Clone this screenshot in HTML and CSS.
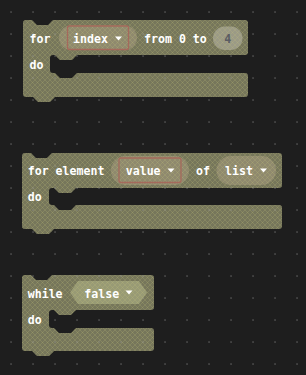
FILE: index.html
```html
<!DOCTYPE html>
<html lang="en">
  <head>
    <meta charset="utf-8" />
    <meta name="viewport" content="width=device-width, initial-scale=1.0" />
    <title>Loops workspace</title>
    <link rel="stylesheet" href="styles.css">
  </head>
  <body>
    <svg class="workspace" width="306" height="375" viewBox="0 0 306 375">
      <defs>
        <pattern id="dots" width="22" height="22" patternUnits="userSpaceOnUse">
          <rect class="dot" x="10.3" y="11.3" width="1.5" height="1.5"></rect>
        </pattern>
        <pattern id="hatch" width="5" height="5" patternUnits="userSpaceOnUse">
          <path class="hatch-line" d="M0 0L5 5M5 0L0 5"></path>
        </pattern>
      </defs>

      <rect class="grid" width="306" height="375"></rect>

      <!-- for index from 0 to 4 -->
      <g class="block-group">
        <path class="block" d="M23,23 Q23,20 26,20 H32 l5,5 h11 l5,-5 H245 Q248,20 248,23 V52 Q248,55 245,55 H77 l-5,5 h-12 l-5,-5 H53 Q50,55 50,58 V70 Q50,73 53,73 H55 l5,5 h12 l5,-5 H245 Q248,73 248,76 V94 Q248,97 245,97 H55 l-5,5 h-12 l-5,-5 H26 Q23,97 23,94 Z"></path>
        <path class="hatch" d="M23,23 Q23,20 26,20 H32 l5,5 h11 l5,-5 H245 Q248,20 248,23 V52 Q248,55 245,55 H77 l-5,5 h-12 l-5,-5 H53 Q50,55 50,58 V70 Q50,73 53,73 H55 l5,5 h12 l5,-5 H245 Q248,73 248,76 V94 Q248,97 245,97 H55 l-5,5 h-12 l-5,-5 H26 Q23,97 23,94 Z"></path>
      </g>

      <!-- for element value of list -->
      <g class="block-group">
        <path class="block" d="M22,156 Q22,153 25,153 H31 l5,5 h11 l5,-5 H279 Q282,153 282,156 V185 Q282,188 279,188 H76 l-5,5 h-12 l-5,-5 H52 Q49,188 49,191 V202 Q49,205 52,205 H54 l5,5 h12 l5,-5 H279 Q282,205 282,208 V226 Q282,229 279,229 H54 l-5,5 h-12 l-5,-5 H25 Q22,229 22,226 Z"></path>
        <path class="hatch" d="M22,156 Q22,153 25,153 H31 l5,5 h11 l5,-5 H279 Q282,153 282,156 V185 Q282,188 279,188 H76 l-5,5 h-12 l-5,-5 H52 Q49,188 49,191 V202 Q49,205 52,205 H54 l5,5 h12 l5,-5 H279 Q282,205 282,208 V226 Q282,229 279,229 H54 l-5,5 h-12 l-5,-5 H25 Q22,229 22,226 Z"></path>
      </g>

      <!-- while false -->
      <g class="block-group">
        <path class="block" d="M22,278 Q22,275 25,275 H31 l5,5 h11 l5,-5 H151 Q154,275 154,278 V307 Q154,310 151,310 H76 l-5,5 h-12 l-5,-5 H52 Q49,310 49,313 V325 Q49,328 52,328 H54 l5,5 h12 l5,-5 H151 Q154,328 154,331 V348 Q154,351 151,351 H54 l-5,5 h-12 l-5,-5 H25 Q22,351 22,348 Z"></path>
        <path class="hatch" d="M22,278 Q22,275 25,275 H31 l5,5 h11 l5,-5 H151 Q154,275 154,278 V307 Q154,310 151,310 H76 l-5,5 h-12 l-5,-5 H52 Q49,310 49,313 V325 Q49,328 52,328 H54 l5,5 h12 l5,-5 H151 Q154,328 154,331 V348 Q154,351 151,351 H54 l-5,5 h-12 l-5,-5 H25 Q22,351 22,348 Z"></path>
      </g>

      <rect class="grid-over" width="306" height="375"></rect>

      <!-- fields block 1 -->
      <text class="label" x="29.5" y="43">for</text>
      <rect class="field-var" x="59" y="25.5" width="78" height="24.5" rx="12.25"></rect>
      <rect class="hatch" x="59" y="25.5" width="78" height="24.5" rx="12.25"></rect>
      <rect class="field-sel" x="67.5" y="26" width="61" height="23.5" rx="2"></rect>
      <text class="label" x="73" y="43">index</text>
      <path class="arrow" d="M115,36.5 H122 L118.5,40.5 Z"></path>
      <text class="label" x="144" y="43">from 0 to</text>
      <rect class="field-num" x="213" y="26.5" width="29.5" height="23.5" rx="11.75"></rect>
      <rect class="hatch" x="213" y="26.5" width="29.5" height="23.5" rx="11.75"></rect>
      <text class="label-num" x="227.75" y="42.7">4</text>
      <text class="label" x="29.5" y="69">do</text>

      <!-- fields block 2 -->
      <text class="label" x="27.7" y="175">for element</text>
      <rect class="field-var" x="111" y="156" width="78" height="29" rx="14.5"></rect>
      <rect class="hatch" x="111" y="156" width="78" height="29" rx="14.5"></rect>
      <rect class="field-sel" x="119" y="158" width="62" height="24.5" rx="2"></rect>
      <text class="label" x="125.7" y="175">value</text>
      <path class="arrow" d="M167.5,168.5 H174.5 L171,172.5 Z"></path>
      <text class="label" x="196" y="175">of</text>
      <rect class="field-var" x="216.5" y="156" width="59.5" height="29" rx="14.5"></rect>
      <rect class="hatch" x="216.5" y="156" width="59.5" height="29" rx="14.5"></rect>
      <text class="label" x="225" y="175">list</text>
      <path class="arrow" d="M260,168.5 H267 L263.5,172.5 Z"></path>
      <text class="label" x="27.7" y="201">do</text>

      <!-- fields block 3 -->
      <text class="label" x="27.7" y="297.5">while</text>
      <path class="field-bool" d="M70,292.5 L78,281 H139 L147,292.5 L139,304 H78 Z"></path>
      <path class="hatch" d="M70,292.5 L78,281 H139 L147,292.5 L139,304 H78 Z"></path>
      <text class="label" x="84.3" y="297.5">false</text>
      <path class="arrow" d="M125.5,290.5 H132.5 L129,294.5 Z"></path>
      <text class="label" x="27.7" y="324">do</text>
    </svg>
  </body>
</html>
```

FILE: styles.css
```css
body{
  margin: 0;
  background: #1e1e1e;
  overflow: hidden;
}
.workspace{
  display: block;
}
.grid{
  fill: #1e1e1e;
}
.grid-over{
  fill: url(#dots);
}
.dot{
  fill: rgba(150, 150, 150, 0.45);
}
.block{
  fill: #76765b;
}
.hatch{
  fill: url(#hatch);
}
.hatch-line{
  stroke: rgba(200, 200, 120, 0.2);
  stroke-width: 1;
}
.field-var{
  fill: #8f896e;
}
.field-sel{
  fill: none;
  stroke: #a5695b;
  stroke-width: 1.3;
}
.field-num{
  fill: #9b9a86;
}
.field-bool{
  fill: #989a75;
}
.label,
.label-num{
  font-family: "DejaVu Sans Mono", "Liberation Mono", monospace;
  font-size: 11.6px;
  font-weight: bold;
  fill: #ffffff;
}
.label-num{
  fill: #5a5c62;
  text-anchor: middle;
}
.arrow{
  fill: #ffffff;
}
```
